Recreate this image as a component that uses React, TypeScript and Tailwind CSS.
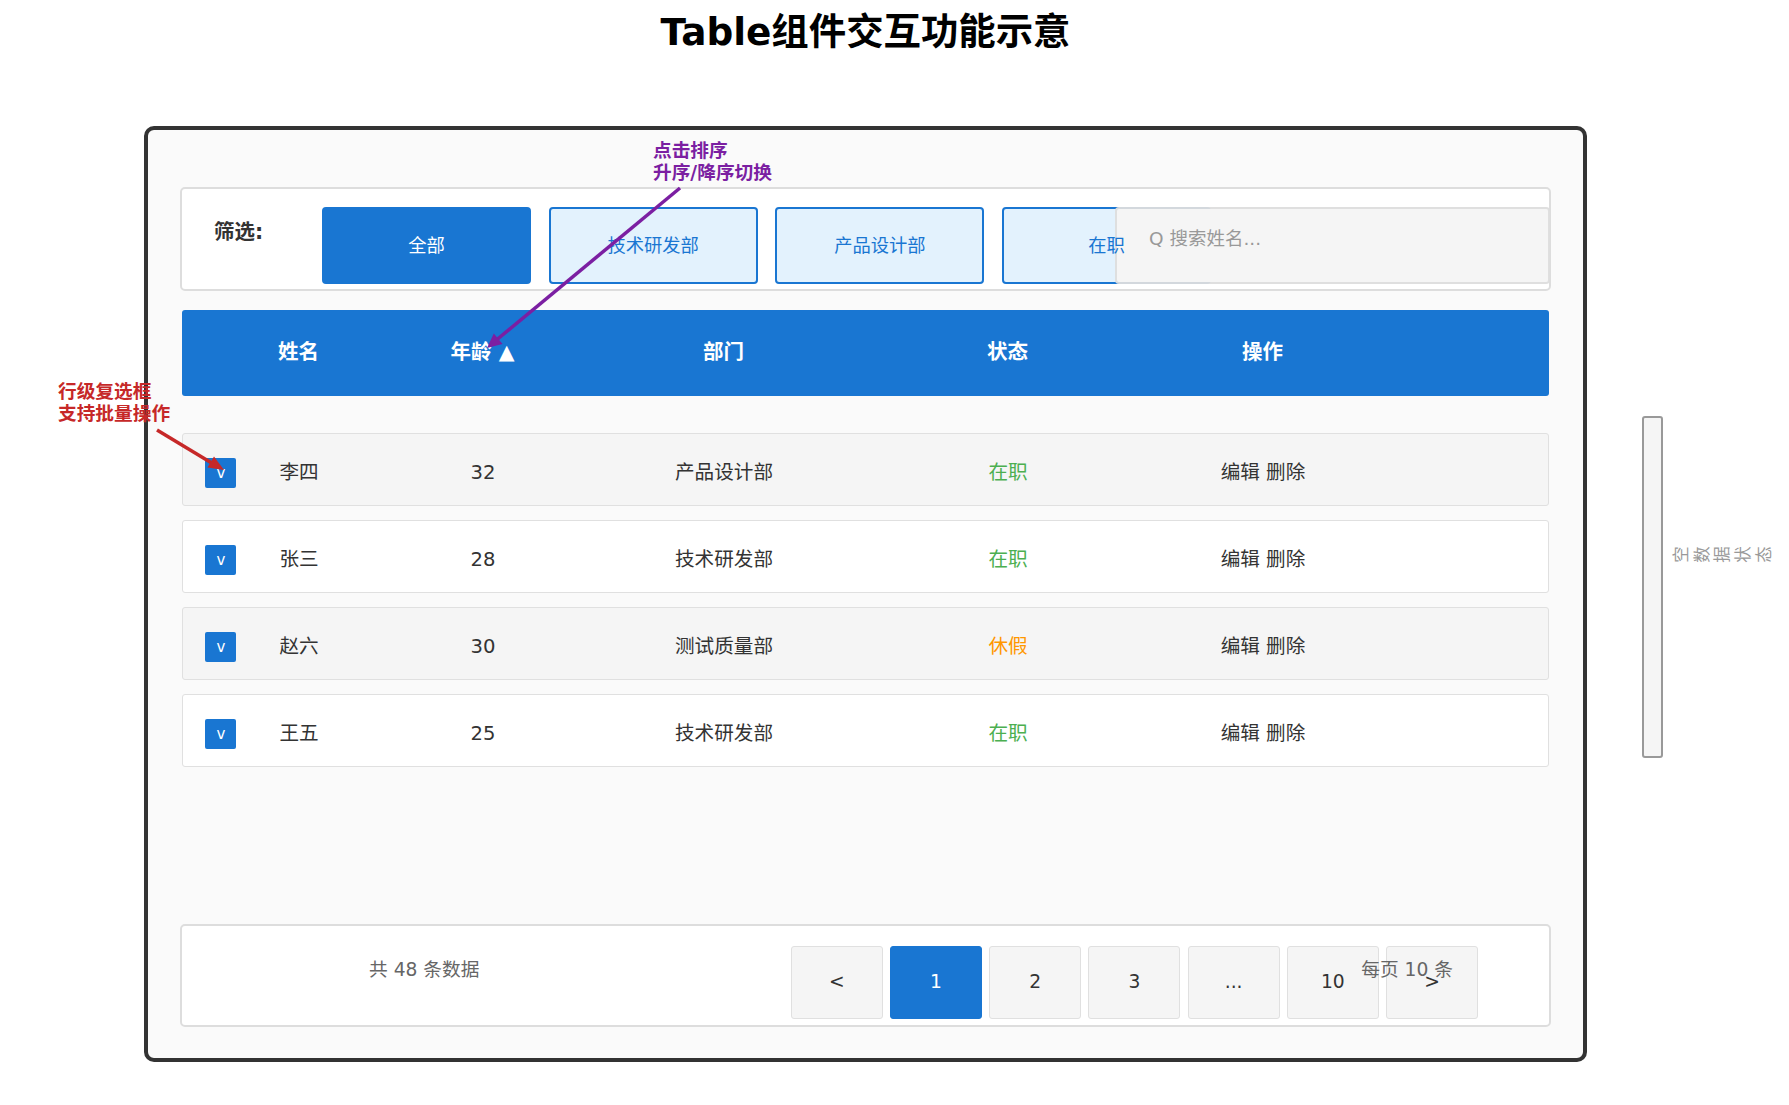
import React from "react";

const headCols = "grid grid-cols-[58.5px_116px_252px_230px_338px_172px_1fr]";
const rowCols = "grid grid-cols-[58px_116px_252px_230px_338px_172px_1fr]";

const rows = [
  { name: "李四", age: "32", dept: "产品设计部", status: "在职", color: "text-[#4caf50]", bg: "bg-[#f5f5f5]" },
  { name: "张三", age: "28", dept: "技术研发部", status: "在职", color: "text-[#4caf50]", bg: "bg-white" },
  { name: "赵六", age: "30", dept: "测试质量部", status: "休假", color: "text-[#ff9800]", bg: "bg-[#f5f5f5]" },
  { name: "王五", age: "25", dept: "技术研发部", status: "在职", color: "text-[#4caf50]", bg: "bg-white" },
];

function FilterButton({ label, active }: { label: string; active?: boolean }) {
  return (
    <div
      className={
        "w-[209px] h-[77px] shrink-0 rounded-[4px] border-2 border-[#1976d2] flex items-center justify-center text-[18.3px] " +
        (active ? "bg-[#1976d2] text-white" : "bg-[#e3f2fd] text-[#1976d2]")
      }
    >
      <span className="relative z-10">{label}</span>
    </div>
  );
}

function PageButton({ label, active }: { label: string; active?: boolean }) {
  return (
    <div
      className={
        "w-[92px] h-[73px] rounded-[3px] border-[1.5px] flex items-center justify-center text-[18.7px] " +
        (active ? "bg-[#1976d2] border-[#1976d2] text-white" : "bg-[#f5f5f5] border-[#e0e0e0] text-[#333333]")
      }
    >
      {label}
    </div>
  );
}

export default function App() {
  return (
    <div className="relative w-[1789px] h-[1105px] bg-white overflow-hidden flex items-start [font-family:'DejaVu_Sans','Noto_Sans_CJK_SC',sans-serif]">
      <div className="ml-[144px] w-[1443px] shrink-0 flex flex-col">
        <h1 className="mt-[10px] h-[44px] leading-[44px] text-center text-[37.4px] font-bold text-black">Table组件交互功能示意</h1>

        <div className="mt-[72px] h-[936px] rounded-[10px] border-4 border-[#333333] bg-[#fafafa] px-[32px] pt-[57px] pb-[31px] flex flex-col">
          {/* filter bar */}
          <div className="relative h-[104px] shrink-0 rounded-[5px] border-2 border-[#dddddd] bg-white pt-[18px] pl-[32px] flex items-start">
            <div className="w-[108px] shrink-0 mt-[13px] leading-[24px] text-[20.5px] font-bold text-[#333333]">筛选:</div>
            <div className="flex gap-[17.7px]">
              <FilterButton label="全部" active />
              <FilterButton label="技术研发部" />
              <FilterButton label="产品设计部" />
              <FilterButton label="在职" />
            </div>
            <div className="absolute z-[5] right-[-1px] top-[18px] w-[435px] h-[77px] rounded-[4px] border-2 border-[#dddddd]/95 bg-[#f5f5f5] bg-clip-padding pl-[32px] pt-[18px] leading-[24px] text-[18.5px] text-[#999999]">
              Q 搜索姓名...
            </div>
          </div>

          {/* table header */}
          <div className={headCols + " mt-[19px] mx-[2px] h-[86px] shrink-0 items-center rounded-[3px] bg-[#1976d2] pb-[2px] text-[20.5px] font-bold text-white text-center"}>
            <div />
            <div>姓名</div>
            <div>年龄 ▲</div>
            <div>部门</div>
            <div>状态</div>
            <div>操作</div>
          </div>

          {/* rows */}
          <div className="mt-[37px] mx-[2px] flex flex-col gap-[14px]">
            {rows.map((r) => (
              <div
                key={r.name}
                className={rowCols + " h-[73px] items-center rounded-[3px] border-[1.5px] border-[#e0e0e0] text-center text-[19.6px] text-[#333333] " + r.bg}
              >
                <div className="pl-[22px] pt-[7px]">
                  <div className="w-[31px] h-[30px] rounded-[2px] bg-[#1976d2] text-white text-[15px] flex items-center justify-center pl-[1px]">v</div>
                </div>
                <div className="pt-[7px]">{r.name}</div>
                <div className="pt-[7px]">{r.age}</div>
                <div className="pt-[7px]">{r.dept}</div>
                <div className={"pt-[7px] " + r.color}>{r.status}</div>
                <div className="pt-[7px]">编辑 删除</div>
              </div>
            ))}
          </div>

          {/* pagination */}
          <div className="relative mt-auto h-[103px] shrink-0 rounded-[5px] border-2 border-[#dddddd] bg-white pl-[187px] pr-[71px] flex items-start justify-between">
            <div className="mt-[32px] leading-[24px] text-[18.7px] text-[#666666]">共 48 条数据</div>
            <div className="mt-[20px] flex gap-[7.2px]">
              {["<", "1", "2", "3", "...", "10", ">"].map((p) => (
                <PageButton key={p} label={p} active={p === "1"} />
              ))}
            </div>
            <div className="absolute right-[96px] top-[32px] leading-[24px] text-[18.7px] text-[#666666]">每页 10 条</div>
          </div>
        </div>
      </div>

      {/* side strip */}
      <div className="ml-[54.5px] mt-[416px] w-[21px] h-[342px] shrink-0 rounded-[3px] border-2 border-[#999999] bg-[#f5f5f5]" />
      <div className="ml-[11px] mt-[549px] w-[102px] h-[16px] shrink-0 flex items-center justify-center">
        <span className="-rotate-90 whitespace-nowrap [writing-mode:vertical-rl] [text-orientation:upright] text-[16.5px] leading-[16.5px] tracking-[4.2px] text-[#999999]">
          空数据状态
        </span>
      </div>

      {/* annotations */}
      <div className="absolute left-[653px] top-[140px] z-20 text-[18.7px] leading-[22px] font-bold text-[#7b1fa2]">
        点击排序
        <br />
        升序/降序切换
      </div>
      <div className="absolute left-[58px] top-[381px] z-20 text-[18.7px] leading-[22px] font-bold text-[#c62828]">
        行级复选框
        <br />
        支持批量操作
      </div>
      <svg className="absolute left-0 top-0 z-20 pointer-events-none" width="1789" height="1105" viewBox="0 0 1789 1105">
        <line x1="680" y1="188" x2="494" y2="342" stroke="#7b1fa2" strokeWidth="3.5" />
        <polygon points="487,348 493.8,333.6 502.5,344" fill="#7b1fa2" />
        <line x1="157" y1="430" x2="215" y2="465" stroke="#c62828" strokeWidth="3.5" />
        <polygon points="224,470 214,456.5 207.5,467.5" fill="#c62828" />
      </svg>
    </div>
  );
}
